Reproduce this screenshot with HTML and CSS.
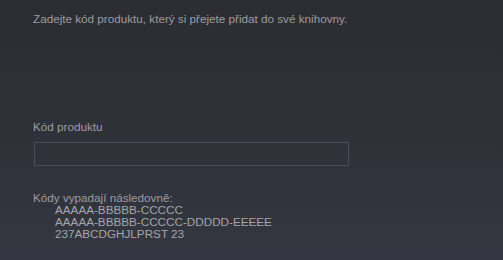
FILE: index.html
```html
<!DOCTYPE html>
<html lang="cs">
<head>
<meta charset="utf-8">
<link rel="stylesheet" href="styles.css">
</head>
<body>
<div class="dialog">
  <p class="intro">Zadejte kód produktu, který si přejete přidat do své knihovny.</p>
  <label class="label" for="code">Kód produktu</label>
  <input class="input" id="code" type="text">
  <div class="formats">
    <div class="formats-title">Kódy vypadají následovně:</div>
    <div class="formats-item">AAAAA-BBBBB-CCCCC</div>
    <div class="formats-item">AAAAA-BBBBB-CCCCC-DDDDD-EEEEE</div>
    <div class="formats-item">237ABCDGHJLPRST 23</div>
  </div>
</div>
</body>
</html>
```
FILE: styles.css
```css
html, body {
  margin: 0;
  height: 100%;
}
body {
  background: linear-gradient(to bottom, #2b2d32 0%, #30323a 60%, #343741 100%);
  font-family: "Liberation Sans", Arial, sans-serif;
  font-size: 11.7px;
  color: #9b9ca2;
}
.dialog {
  display: flex;
  flex-direction: column;
  align-items: flex-start;
  padding: 12px 0 0 33px;
}
.intro {
  margin: 0;
  line-height: 13px;
}
.label {
  margin-top: 95px;
  line-height: 13px;
}
.input {
  margin: 9px 0 0 1px;
  box-sizing: border-box;
  width: 315px;
  height: 24px;
  background: transparent;
  border: 1px solid #4b4e57;
  outline: none;
  padding: 0 4px;
  color: #c6c7cb;
  font: inherit;
}
.formats {
  margin-top: 26px;
  line-height: 12px;
}
.formats-item {
  padding-left: 22px;
  color: #a4a5ab;
}
```
